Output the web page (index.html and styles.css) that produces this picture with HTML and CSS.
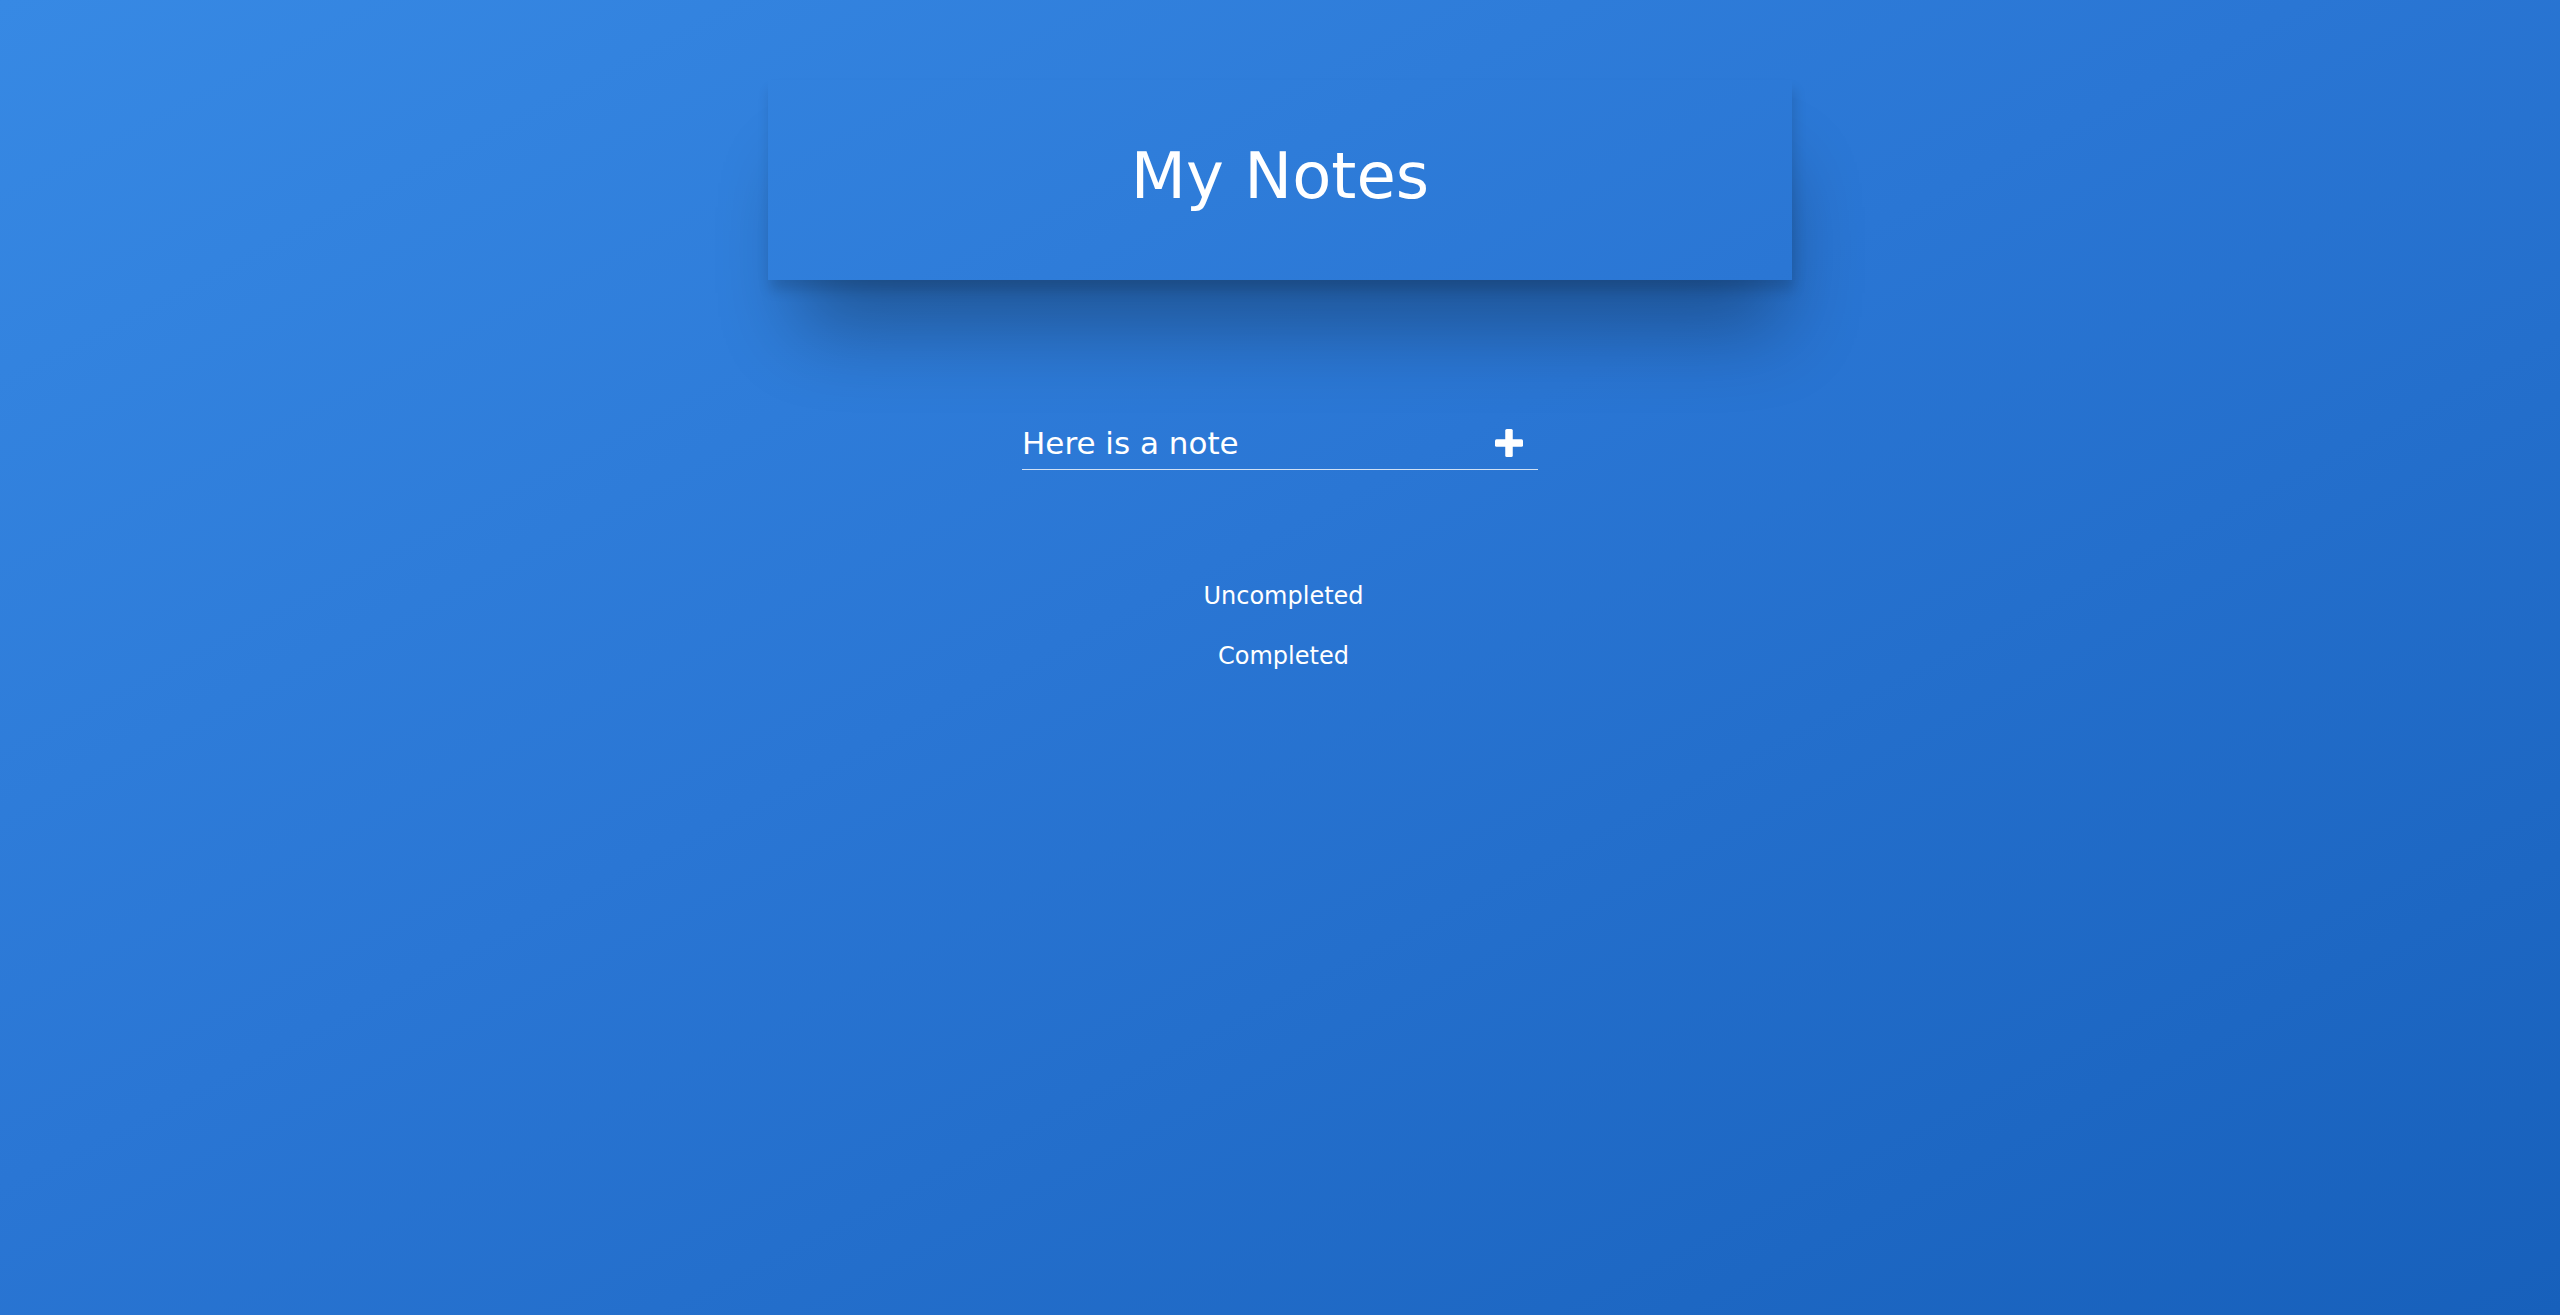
FILE: index.html
```html
<!DOCTYPE html>
<html lang="en">
<head>
<meta charset="utf-8">
<title>My Notes</title>
<link rel="stylesheet" href="styles.css">
</head>
<body>
  <div class="page">
    <header class="header">
      <h1 class="title">My Notes</h1>
    </header>
    <form class="note-form">
      <input class="note-input" type="text" value="Here is a note">
      <button class="add-btn" type="button" aria-label="Add note">
        <svg class="plus" width="28" height="28" viewBox="0 0 28 28">
          <rect x="10.25" y="0" width="7.5" height="28" rx="1.5" fill="#fff"/>
          <rect x="0" y="10.25" width="28" height="7.5" rx="1.5" fill="#fff"/>
        </svg>
      </button>
    </form>
    <nav class="tabs">
      <span class="tab">Uncompleted</span>
      <span class="tab">Completed</span>
    </nav>
  </div>
</body>
</html>
```
FILE: styles.css
```css
html, body {
  margin: 0;
  padding: 0;
}
body {
  height: 100vh;
  overflow: hidden;
  background: linear-gradient(to bottom right, #3789e4 0%, #2a76d4 45%, #1760bb 100%);
  font-family: "DejaVu Sans", "Liberation Sans", sans-serif;
  color: #fff;
}
.page {
  display: flex;
  flex-direction: column;
  align-items: center;
  padding-top: 80px;
}
.header {
  width: 1024px;
  height: 200px;
  display: flex;
  align-items: center;
  justify-content: center;
  box-shadow: 10px 70px 80px -20px rgba(0, 0, 0, 0.3), 2px 10px 12px rgba(0, 0, 0, 0.14);
  box-sizing: border-box;
  padding-bottom: 8px;
}
.title {
  margin: 0;
  font-size: 64px;
  font-weight: 400;
  line-height: normal;
  color: #fff;
}
.note-form {
  display: flex;
  margin-top: 145px;
  width: 516px;
}
.note-input {
  flex: 1;
  height: 45px;
  box-sizing: border-box;
  padding: 0 0 8px 0;
  margin: 0;
  border: none;
  border-bottom: 1px solid rgba(255, 255, 255, 0.78);
  background: transparent;
  color: #fff;
  font-family: "DejaVu Sans", "Liberation Sans", sans-serif;
  font-size: 31px;
  line-height: 36px;
  outline: none;
}
.add-btn {
  width: 43px;
  height: 45px;
  box-sizing: border-box;
  padding: 0 0 8px 0;
  margin: 0;
  border: none;
  border-bottom: 1px solid rgba(255, 255, 255, 0.78);
  background: transparent;
  display: flex;
  align-items: center;
  justify-content: flex-start;
}
.plus {
  display: block;
}
.tabs {
  display: flex;
  flex-direction: column;
  align-items: center;
  gap: 32px;
  margin-top: 112px;
  margin-left: 7px;
}
.tab {
  font-size: 24px;
  line-height: 28px;
  color: #fff;
}
```
